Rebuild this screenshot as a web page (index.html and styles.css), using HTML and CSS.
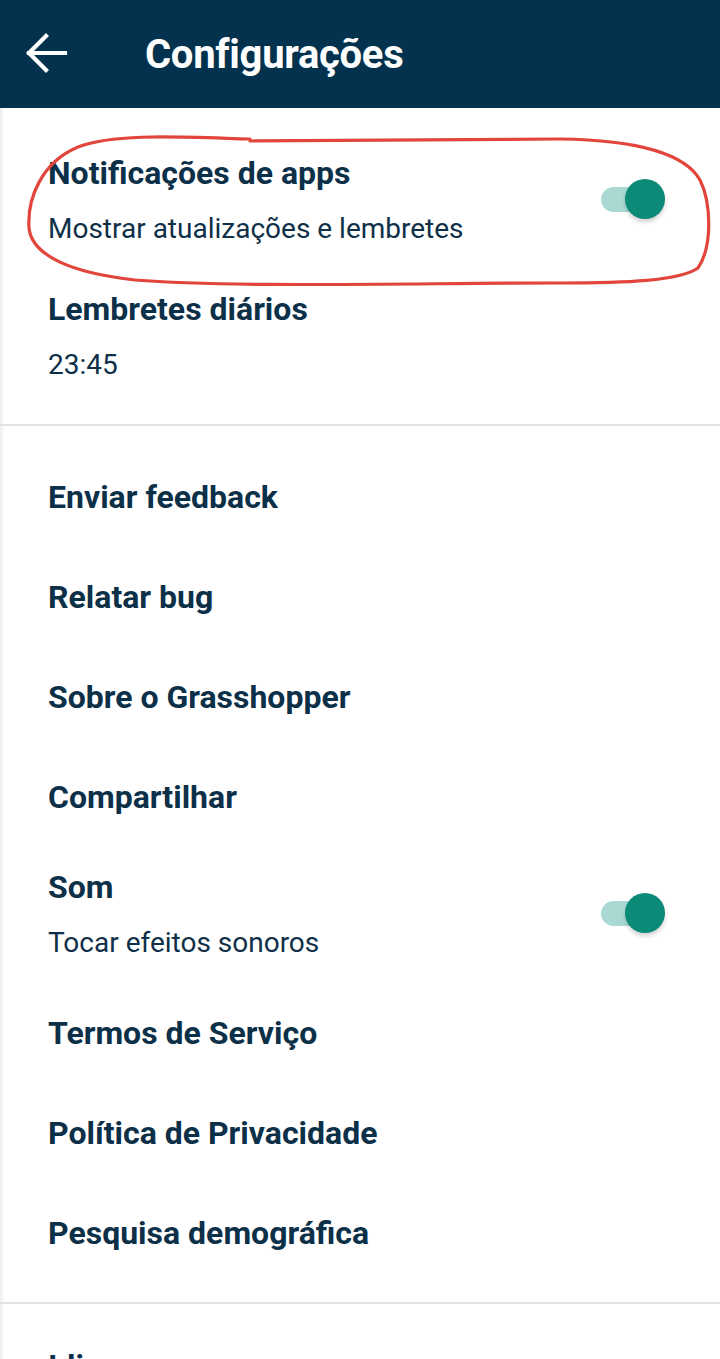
FILE: index.html
```html
<!DOCTYPE html>
<html lang="pt">
<head>
<meta charset="utf-8">
<title>Configurações</title>
<link rel="stylesheet" href="styles.css">
</head>
<body>
<div class="screen">
  <header class="appbar">
    <svg class="back" width="50" height="50" viewBox="20 29 50 50" aria-hidden="true">
      <path d="M65 54 H29 M46 37 L29 54 L46 71" fill="none" stroke="#fff" stroke-width="4.2" stroke-linecap="square" stroke-linejoin="miter"/>
    </svg>
    <h1 class="title">Configurações</h1>
  </header>

  <main class="content">
    <section class="group group-first">
      <div class="item two">
        <div class="texts">
          <div class="item-title">Notificações de apps</div>
          <div class="item-sub">Mostrar atualizações e lembretes</div>
        </div>
        <div class="switch"><span class="track"></span><span class="thumb"></span></div>
      </div>
      <div class="item two">
        <div class="texts">
          <div class="item-title">Lembretes diários</div>
          <div class="item-sub">23:45</div>
        </div>
      </div>
    </section>
    <hr class="divider">
    <section class="group group-mid">
      <div class="item one"><div class="item-title">Enviar feedback</div></div>
      <div class="item one"><div class="item-title">Relatar bug</div></div>
      <div class="item one"><div class="item-title">Sobre o Grasshopper</div></div>
      <div class="item one"><div class="item-title">Compartilhar</div></div>
      <div class="item two">
        <div class="texts">
          <div class="item-title">Som</div>
          <div class="item-sub">Tocar efeitos sonoros</div>
        </div>
        <div class="switch"><span class="track"></span><span class="thumb"></span></div>
      </div>
      <div class="item one"><div class="item-title">Termos de Serviço</div></div>
      <div class="item one"><div class="item-title">Política de Privacidade</div></div>
      <div class="item one"><div class="item-title">Pesquisa demográfica</div></div>
    </section>
    <hr class="divider">
    <section class="group group-last">
      <div class="item two">
        <div class="texts">
          <div class="item-title">Idioma</div>
          <div class="item-sub">Português</div>
        </div>
      </div>
    </section>

    <svg class="annotation" width="720" height="300" viewBox="0 0 720 300" aria-hidden="true">
      <path d="M250 139 C180 137 115 133 78 147 C42 162 27 198 29 228 C32 256 72 273 135 280 C230 288 420 283 560 283 C625 283 680 281 698 268 C713 246 711 202 700 180 C686 155 640 140 560 139 L250 141"
            fill="none" stroke="#e2453b" stroke-width="3.2" stroke-linecap="round" stroke-linejoin="round"/>
    </svg>
  </main>
</div>
</body>
</html>
```

FILE: styles.css
```css
html, body {
  margin: 0;
  padding: 0;
  background: #ffffff;
}

body {
  font-family: Roboto, "Noto Sans", "Liberation Sans", sans-serif;
  color: #0d3049;
}

.screen {
  width: 720px;
  height: 1359px;
  overflow: hidden;
  position: relative;
}

.appbar {
  height: 108px;
  background: #02324d;
  display: flex;
  align-items: center;
}

.back {
  display: block;
  margin-left: 20px;
  margin-top: -2px;
}

.title {
  margin: 0 0 0 75px;
  color: #ffffff;
  font-family: Roboto, "Liberation Sans", sans-serif;
  font-weight: 700;
  font-size: 40px;
  line-height: 48px;
  letter-spacing: -0.3px;
  margin-top: 2px;
}

.content {
  position: relative;
  background: linear-gradient(to right, #ebebeb 0, #fafafa 3px, #ffffff 6px);
}

.group-first { padding: 25px 0 19px; }
.group-mid { padding: 21px 0 19px; }
.group-last { padding: 22px 0 0; }

.divider {
  margin: 0;
  border: 0;
  height: 2px;
  background: #e2e2e2;
}

.item {
  display: flex;
  align-items: center;
  justify-content: space-between;
  padding-left: 48px;
  padding-right: 55px;
}

.item.one {
  height: 100px;
}

.item.two {
  padding-top: 22px;
  padding-bottom: 22px;
}

.texts {
  display: flex;
  flex-direction: column;
  gap: 20px;
}

.item-title {
  font-size: 32px;
  font-weight: 700;
  line-height: 36px;
  color: #0d3049;
}

.item-sub {
  font-size: 28px;
  font-weight: 400;
  line-height: 36px;
  color: #0f3048;
}

.switch {
  position: relative;
  width: 64px;
  height: 40px;
  margin-top: -4px;
}

.track {
  position: absolute;
  left: 0;
  top: 8px;
  width: 56px;
  height: 25px;
  border-radius: 13px;
  background: #aad9d4;
}

.thumb {
  position: absolute;
  right: 0;
  top: 0;
  width: 40px;
  height: 40px;
  border-radius: 50%;
  background: #0b8a77;
  box-shadow: 0 3px 4px rgba(0, 0, 0, 0.18);
}

.annotation {
  position: absolute;
  left: 0;
  top: -108px;
  pointer-events: none;
}
```
